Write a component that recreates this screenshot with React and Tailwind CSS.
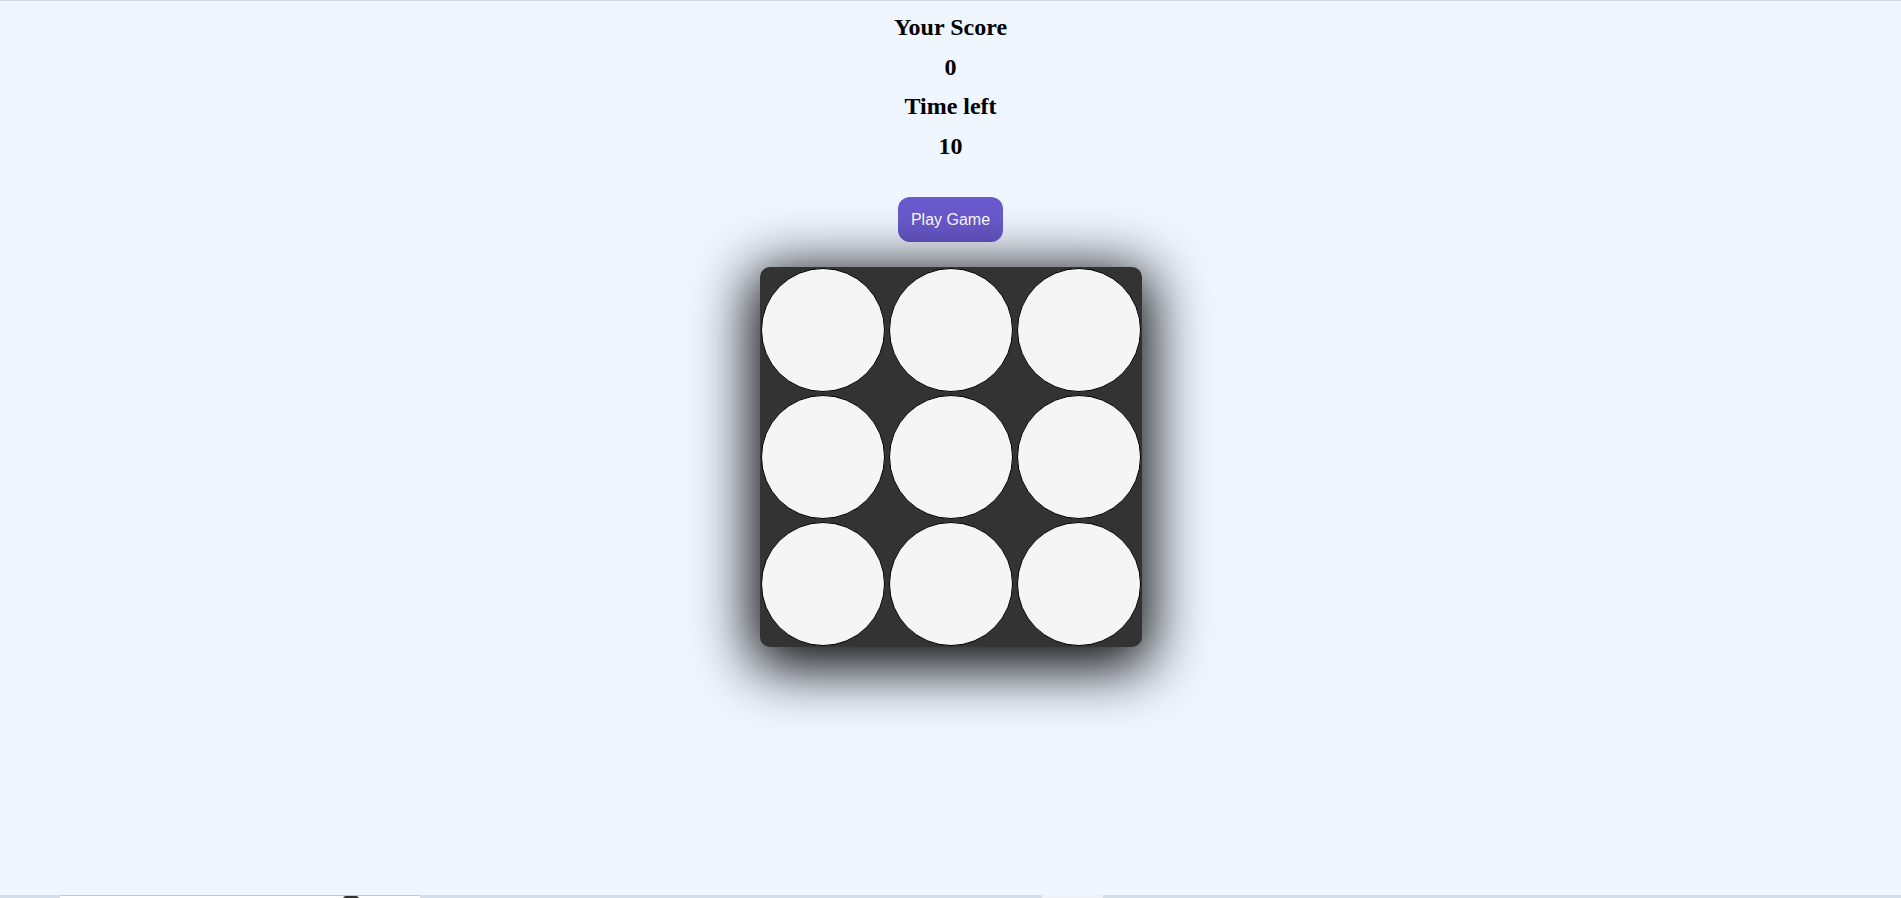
import React, { useState } from "react";

const HOLES = Array.from({ length: 9 }, (_, i) => i);

const App = () => {
  const [score] = useState(0);
  const [timeLeft] = useState(10);

  return (
    <div className="h-screen flex flex-col bg-[#eff6ff] border-t border-[#d6d9dd] overflow-hidden">
      <main className="flex-1 flex flex-col items-center pt-[7px]">
        <div className="flex flex-col items-center font-['Liberation_Serif',serif] font-bold text-[24px] leading-[39.5px] text-black">
          <div>Your Score</div>
          <div>{score}</div>
          <div>Time left</div>
          <div>{timeLeft}</div>
        </div>

        <button
          type="button"
          className="mt-[31px] w-[105px] h-[45px] rounded-[12px] bg-[#6a5acd] text-white font-['Liberation_Sans',Arial,sans-serif] text-[16px]"
        >
          Play Game
        </button>

        <div className="mt-[25px] w-[382px] h-[380px] p-[1px] rounded-[10px] bg-[#333333] shadow-[0_12px_60px_8px_#000] grid grid-cols-3 gap-x-[4px] gap-y-[3px]">
          {HOLES.map((i) => (
            <div
              key={i}
              className="w-[124px] h-[124px] rounded-full bg-[#f5f5f5] border border-black"
            />
          ))}
        </div>
      </main>

      {/* bottom strip */}
      <div className="h-[3px] flex bg-[#d3dee8]">
        <div className="w-[60px]" />
        <div className="w-[360px] bg-white border-t border-[#c4c8cc] relative">
          <div className="absolute left-[283px] top-0 w-[16px] h-[3px] rounded-t-full bg-[#333]" />
        </div>
        <div className="w-[622px]" />
        <div className="w-[61px] bg-[#eef2f6]" />
      </div>
    </div>
  );
};

export default App;
